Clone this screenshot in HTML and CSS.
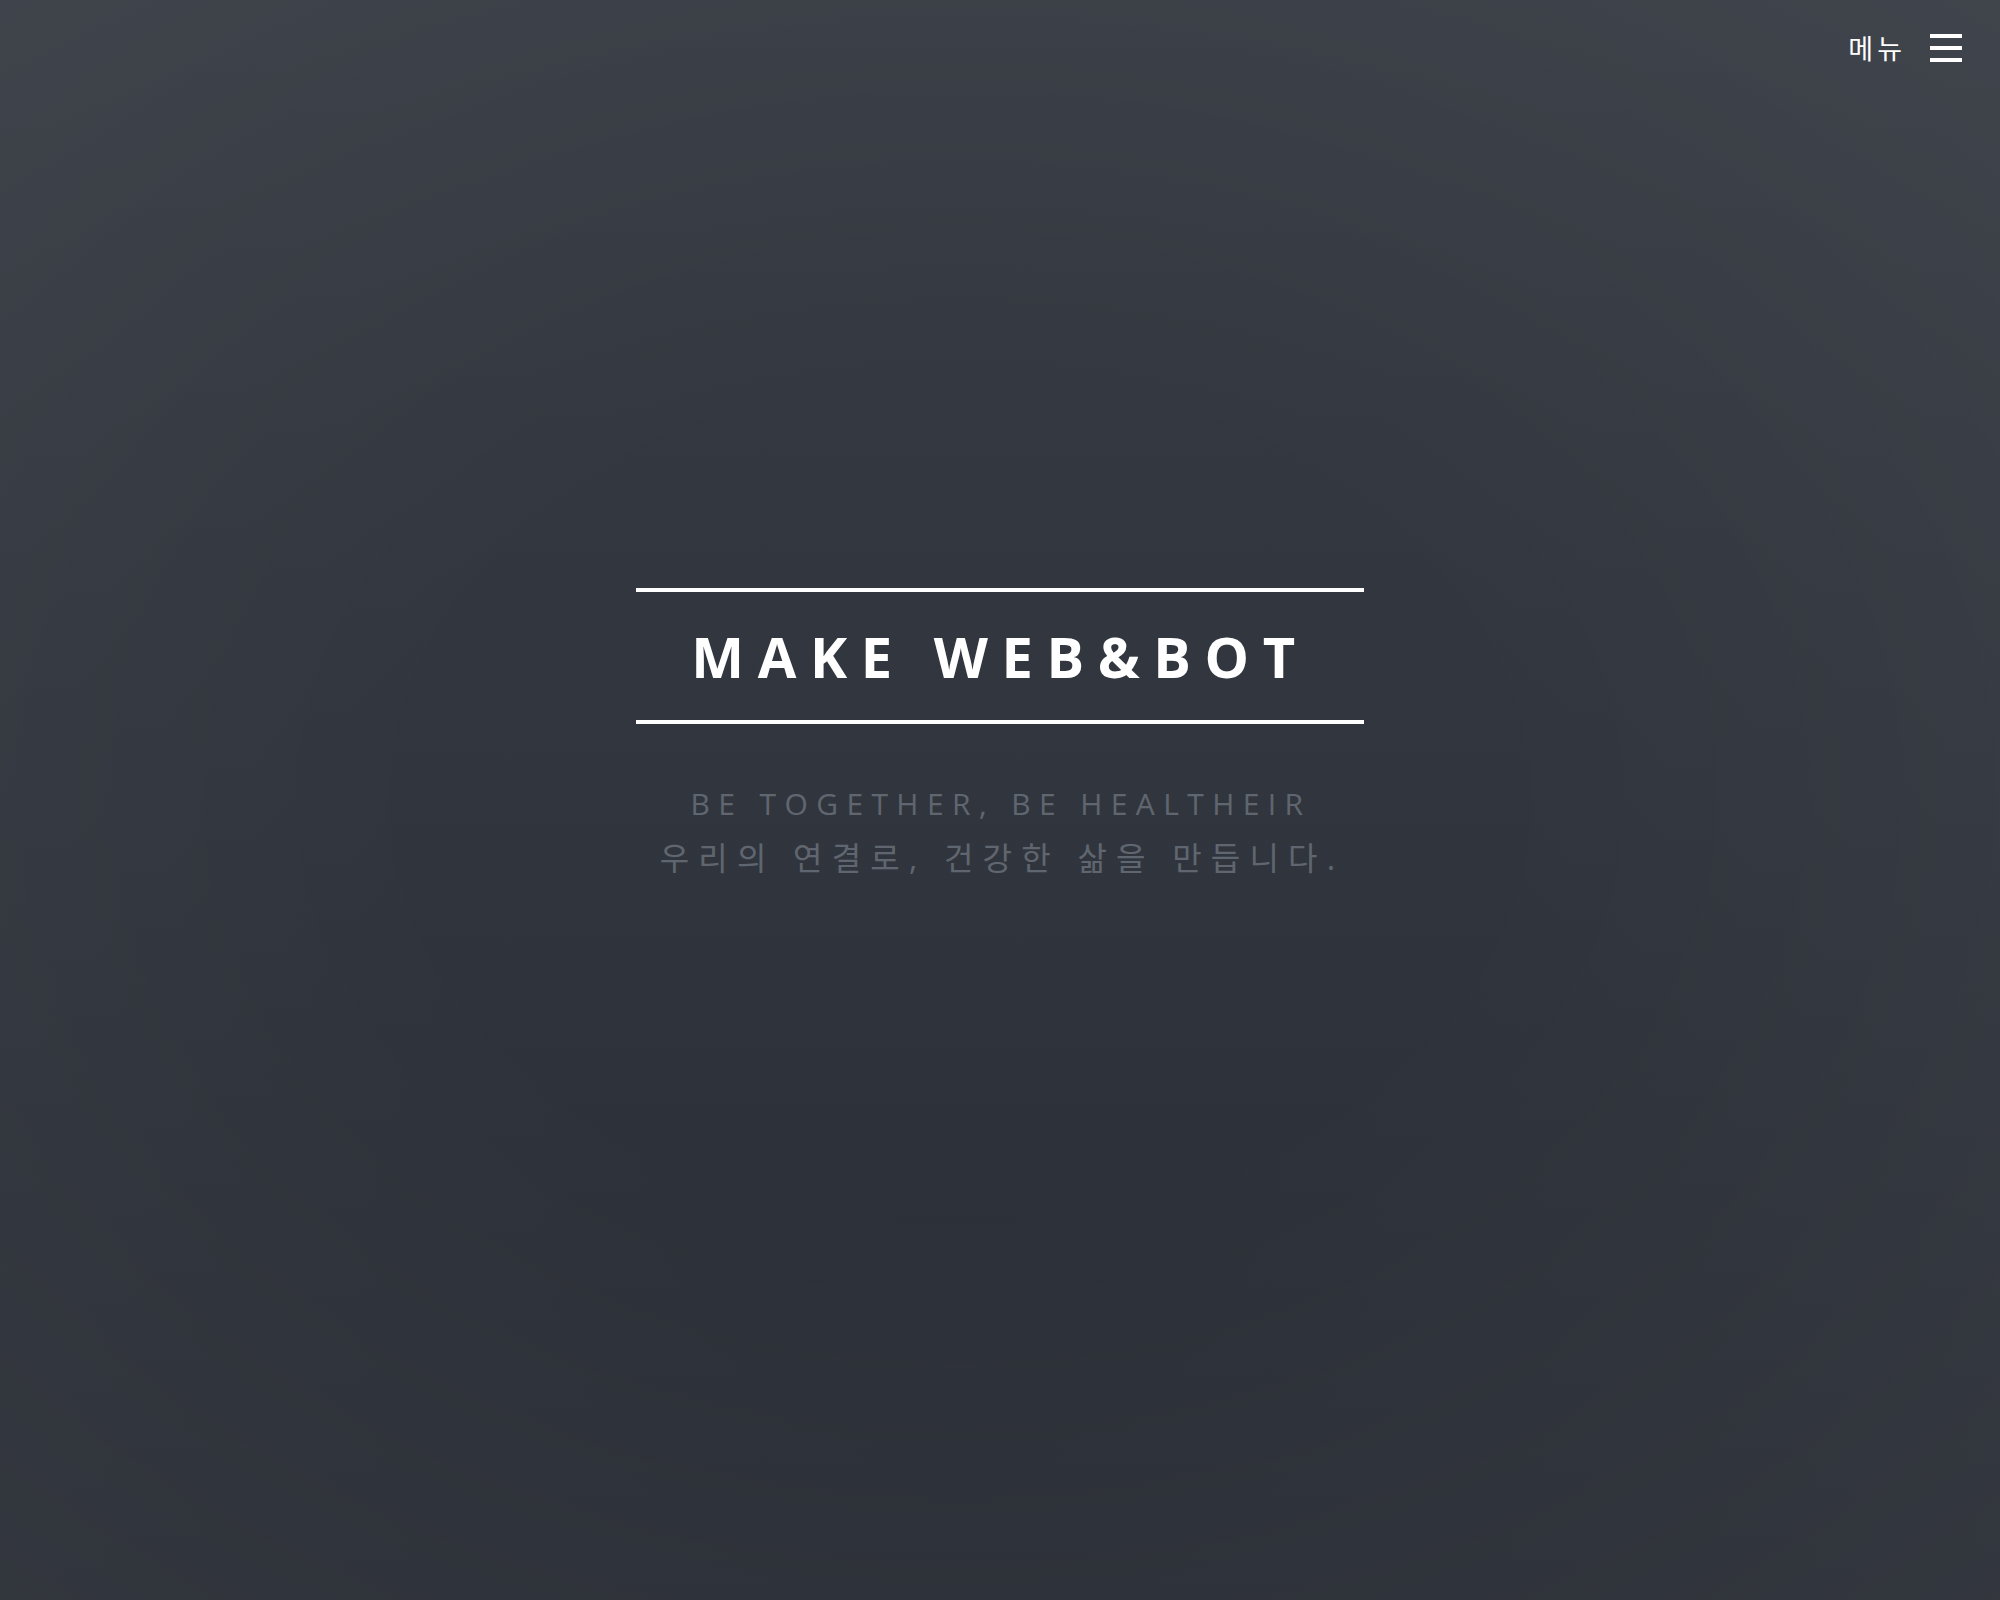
FILE: index.html
```html
<!DOCTYPE html>
<html lang="ko">
<head>
<meta charset="utf-8">
<title>MAKE WEB&amp;BOT</title>
<link rel="stylesheet" href="styles.css">
</head>
<body>
<div class="page">
  <header class="topbar">
    <a class="menu" href="#">
      <span class="menu-label">메뉴</span>
      <span class="burger"><span></span><span></span><span></span></span>
    </a>
  </header>
  <main class="hero">
    <div class="title-box">
      <h1 class="title">MAKE WEB&amp;BOT</h1>
    </div>
    <p class="sub">
      <span class="sub-en">BE TOGETHER, BE HEALTHEIR</span>
      <span class="sub-ko">우리의 연결로, 건강한 삶을 만듭니다.</span>
    </p>
  </main>
</div>
</body>
</html>
```

FILE: styles.css
```css
html, body {
  margin: 0;
  padding: 0;
  height: 100%;
}
body {
  font-family: "Open Sans", "Noto Sans CJK KR", sans-serif;
  background: #30353d;
}
.page {
  position: relative;
  min-height: 1600px;
  display: flex;
  flex-direction: column;
  background:
    radial-gradient(ellipse 75% 70% at 48% 50%, rgba(0,0,0,0) 35%, rgba(255,255,255,0.05) 100%),
    linear-gradient(to bottom, #363b43 0%, #31363e 50%, #282c34 100%);
}
.topbar {
  display: flex;
  justify-content: flex-end;
  padding: 33px 38px 0 0;
  height: 29px;
}
.menu {
  display: flex;
  align-items: center;
  gap: 24px;
  color: #ffffff;
  text-decoration: none;
  height: 29px;
}
.menu-label {
  font-family: "Noto Sans CJK KR", sans-serif;
  font-size: 27px;
  letter-spacing: 4px;
  line-height: 29px;
}
.burger {
  display: flex;
  flex-direction: column;
  gap: 8px;
  width: 32px;
}
.burger span {
  display: block;
  height: 4px;
  background: #ffffff;
}
.hero {
  display: flex;
  flex-direction: column;
  align-items: center;
  padding-top: 526px;
}
.title-box {
  width: 728px;
  height: 128px;
  border-top: 4px solid #ffffff;
  border-bottom: 4px solid #ffffff;
  display: flex;
  align-items: center;
  justify-content: center;
}
.title {
  margin: 0;
  font-family: "Open Sans", sans-serif;
  font-weight: 700;
  font-size: 56px;
  letter-spacing: 13.6px;
  color: #ffffff;
  line-height: 1;
}
.sub {
  margin: 56px 0 0 0;
  display: flex;
  flex-direction: column;
  align-items: center;
  color: #60666f;
  font-weight: 400;
}
.sub-en {
  font-family: "Open Sans", sans-serif;
  font-size: 30px;
  letter-spacing: 8.4px;
  line-height: 48px;
  margin-left: 2px;
}
.sub-ko {
  font-family: "Open Sans", "Noto Sans CJK KR", sans-serif;
  font-weight: 400;
  font-size: 32px;
  letter-spacing: 9.2px;
  line-height: 59px;
  margin-left: 4px;
}
```
